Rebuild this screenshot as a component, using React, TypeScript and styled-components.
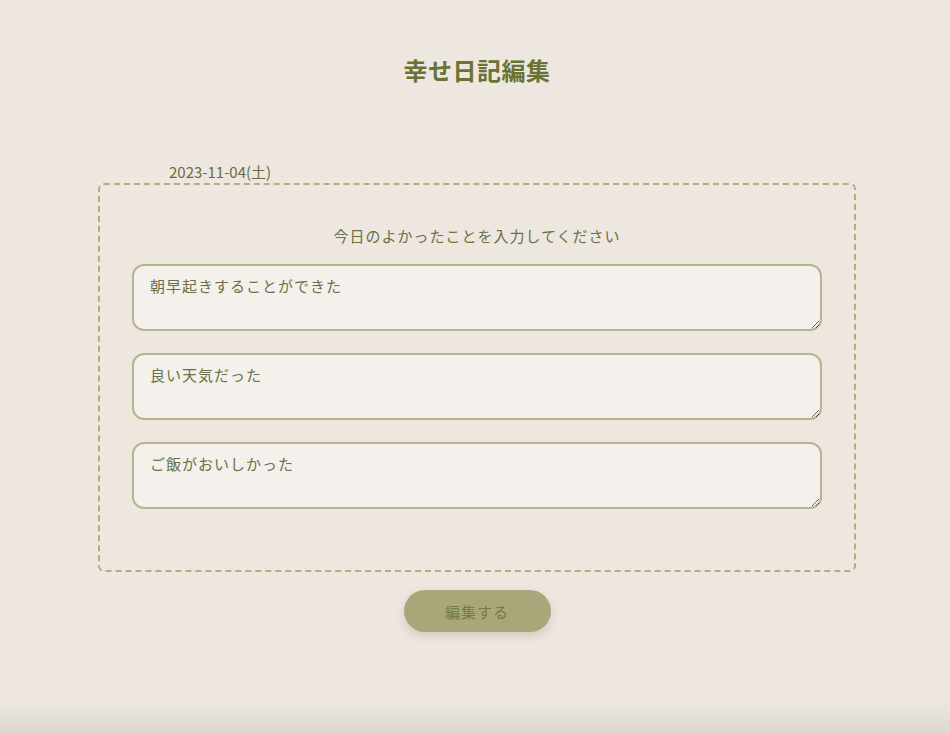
import React, { useState } from 'react';
import styled, { createGlobalStyle } from 'styled-components';

const GlobalStyle = createGlobalStyle`
  html, body, #root {
    height: 100%;
  }
  body {
    margin: 0;
    font-family: "Noto Sans CJK JP", "Noto Sans", sans-serif;
    background: linear-gradient(180deg, #ede7e0 0%, #ede7e0 calc(100% - 34px), #e9e6dc calc(100% - 30px), #dcd8d1 100%);
  }
`;

const Page = styled.main`
  display: flex;
  flex-direction: column;
  align-items: center;
  padding-top: 54px;
`;

const Title = styled.h1`
  margin: 0 0 0 4px;
  font-size: 24px;
  line-height: 32px;
  font-weight: 700;
  letter-spacing: 0.5px;
  color: #687335;
`;

const Section = styled.section`
  width: 758px;
  margin-top: 77px;
  margin-left: 4px;
`;

const DateLabel = styled.div`
  margin-left: 71px;
  font-size: 15px;
  line-height: 18px;
  height: 20px;
  color: #6b6c42;
  font-family: "Liberation Sans Narrow", "Noto Sans CJK JP", sans-serif;
`;

const Frame = styled.div`
  border: 2px dashed #b1ae82;
  border-radius: 6px;
  padding: 41px 32px 61px;
  display: flex;
  flex-direction: column;
  align-items: center;
`;

const Prompt = styled.p`
  margin: 0 0 18px;
  font-size: 15px;
  line-height: 20px;
  letter-spacing: 1px;
  color: #6b6f45;
`;

const Entries = styled.div`
  display: flex;
  flex-direction: column;
  gap: 22px;
  width: 100%;
`;

const Entry = styled.textarea`
  display: block;
  box-sizing: border-box;
  width: 100%;
  height: 67px;
  padding: 10px 16px;
  border: 2px solid #b7b48c;
  border-radius: 12px;
  background: #f4f0ec;
  color: #6b6f45;
  font-family: inherit;
  font-size: 15px;
  line-height: 20px;
  letter-spacing: 1px;
  outline: none;
`;

const SubmitButton = styled.button`
  margin: 18px 0 0 4px;
  width: 147px;
  height: 42px;
  border: none;
  border-radius: 21px;
  background: #a9a77a;
  color: #737a45;
  font-family: inherit;
  font-size: 15px;
  letter-spacing: 1px;
  box-shadow: 0 4px 10px rgba(80, 70, 40, 0.18);
  cursor: pointer;
`;

export default function App() {
  const [entries, setEntries] = useState([
    '朝早起きすることができた',
    '良い天気だった',
    'ご飯がおいしかった',
  ]);

  return (
    <>
      <GlobalStyle />
      <Page>
        <Title>幸せ日記編集</Title>
        <Section>
          <DateLabel>2023-11-04(土)</DateLabel>
          <Frame>
            <Prompt>今日のよかったことを入力してください</Prompt>
            <Entries>
              {entries.map((text, i) => (
                <Entry
                  key={i}
                  value={text}
                  onChange={e => {
                    const next = [...entries];
                    next[i] = e.target.value;
                    setEntries(next);
                  }}
                />
              ))}
            </Entries>
          </Frame>
        </Section>
        <SubmitButton>編集する</SubmitButton>
      </Page>
    </>
  );
}
